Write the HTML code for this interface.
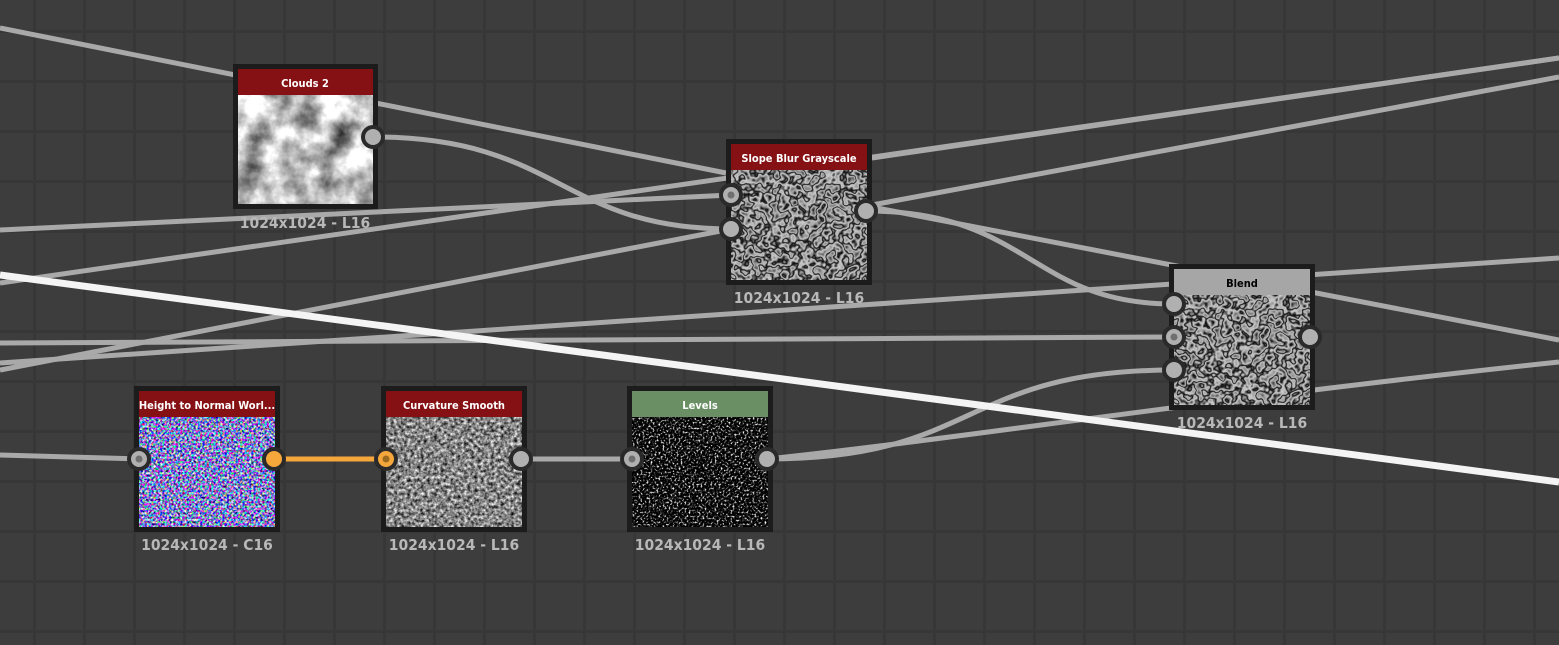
<!DOCTYPE html>
<html><head><meta charset="utf-8"><style>
html,body{margin:0;padding:0;width:1559px;height:645px;overflow:hidden;background:#3c3c3c;}
svg{display:block}
.t{font-family:"DejaVu Sans Condensed","DejaVu Sans","Liberation Sans",sans-serif;font-weight:bold;font-size:11px;text-anchor:middle}
.l{font-family:"DejaVu Sans Condensed","DejaVu Sans","Liberation Sans",sans-serif;font-weight:bold;font-size:15.5px;fill:#b8b8b8;text-anchor:middle}
</style></head><body>
<svg width="1559" height="645" viewBox="0 0 1559 645" xmlns="http://www.w3.org/2000/svg">
<defs>
<pattern id="grid" width="50" height="50" patternUnits="userSpaceOnUse" x="0" y="0">
<rect width="50" height="50" fill="#3d3d3d"/>
<rect x="33" y="0" width="3" height="50" fill="#373737"/>
<rect x="0" y="30" width="50" height="3" fill="#373737"/>
</pattern>
<filter id="clouds" x="0" y="0" width="1" height="1" color-interpolation-filters="sRGB">
<feTurbulence type="fractalNoise" baseFrequency="0.035" numOctaves="5" seed="3"/>
<feColorMatrix type="matrix" values="1.5 0 0 0 -0.05  1.5 0 0 0 -0.05  1.5 0 0 0 -0.05  0 0 0 0 1"/>
</filter>
<filter id="cells" x="0" y="0" width="1" height="1" color-interpolation-filters="sRGB">
<feTurbulence type="fractalNoise" baseFrequency="0.11" numOctaves="2" seed="7"/>
<feColorMatrix type="matrix" values="1 0 0 0 0  1 0 0 0 0  1 0 0 0 0  0 0 0 0 1"/>
<feComponentTransfer>
<feFuncR type="table" tableValues="0 0.08 0.7 0.04 0.6 0.8 0.04 0.75 0.5 0.04 0.65 0.08"/>
<feFuncG type="table" tableValues="0 0.08 0.7 0.04 0.6 0.8 0.04 0.75 0.5 0.04 0.65 0.08"/>
<feFuncB type="table" tableValues="0 0.08 0.7 0.04 0.6 0.8 0.04 0.75 0.5 0.04 0.65 0.08"/>
</feComponentTransfer>
</filter>
<filter id="normal" x="0" y="0" width="1" height="1" color-interpolation-filters="sRGB">
<feTurbulence type="fractalNoise" baseFrequency="0.45" numOctaves="2" seed="2"/>
<feColorMatrix type="matrix" values="2.6 0 0 0 -0.8  0 2.6 0 0 -0.8  0 0 2 0 -0.2  0 0 0 0 1"/>
</filter>
<filter id="curv" x="0" y="0" width="1" height="1" color-interpolation-filters="sRGB">
<feTurbulence type="fractalNoise" baseFrequency="0.3" numOctaves="3" seed="5"/>
<feColorMatrix type="matrix" values="1.4 0 0 0 -0.18  1.4 0 0 0 -0.18  1.4 0 0 0 -0.18  0 0 0 0 1"/>
</filter>
<filter id="lev" x="0" y="0" width="1" height="1" color-interpolation-filters="sRGB">
<feTurbulence type="fractalNoise" baseFrequency="0.5" numOctaves="3" seed="9"/>
<feColorMatrix type="matrix" values="4 0 0 0 -2.1  4 0 0 0 -2.1  4 0 0 0 -2.1  0 0 0 0 1"/>
</filter>
</defs>
<rect width="1559" height="645" fill="url(#grid)"/>
<g fill="none" stroke="#a9a9a9" stroke-width="5">
<line x1="0" y1="28" x2="726" y2="173"/>
<path d="M373 137 C 560 137, 560 229, 731 229"/>
<line x1="0" y1="230" x2="731" y2="195"/>
<line x1="0" y1="283" x2="1559" y2="58"/>
<line x1="0" y1="370" x2="731" y2="229"/>
<line x1="872" y1="158" x2="1559" y2="58"/>
<line x1="872" y1="205" x2="1559" y2="77"/>
<line x1="872" y1="207" x2="1559" y2="340"/>
<path d="M866 211 C 1030 211, 1030 304, 1174 304"/>
<line x1="0" y1="363" x2="1559" y2="258"/>
<line x1="0" y1="343" x2="1174" y2="337"/>
<path d="M767 459 C 980 459, 960 370, 1174 370"/>
<path d="M767 459 C 950 440, 1200 400, 1559 362"/>
<line x1="0" y1="455" x2="139" y2="459"/>
<line x1="521" y1="459" x2="632" y2="459"/>
</g>
<line x1="274" y1="459" x2="386" y2="459" stroke="#f5a73c" stroke-width="5"/>
<line x1="0" y1="275" x2="1559" y2="482" stroke="#f4f4f4" stroke-width="7"/>

<g transform="translate(233,64)">
<rect width="145" height="145" fill="#1c1c1c"/>
<rect x="5" y="31" width="135" height="109" fill="#888" filter="url(#clouds)"/>
<rect x="5" y="5" width="135" height="26" fill="#861115"/>
<text class="t" x="72" y="23" fill="#fff">Clouds 2</text>
<text class="l" x="72" y="164">1024x1024 - L16</text>
</g>
<g transform="translate(726,139)">
<rect width="146" height="146" fill="#1c1c1c"/>
<rect x="5" y="31" width="136" height="110" fill="#888" filter="url(#cells)"/>
<rect x="5" y="5" width="136" height="26" fill="#861115"/>
<text class="t" x="73" y="23" fill="#fff">Slope Blur Grayscale</text>
<text class="l" x="73" y="164">1024x1024 - L16</text>
</g>
<g transform="translate(1169,264)">
<rect width="146" height="146" fill="#1c1c1c"/>
<rect x="5" y="31" width="136" height="110" fill="#888" filter="url(#cells)"/>
<rect x="5" y="5" width="136" height="26" fill="#a6a6a6"/>
<text class="t" x="73" y="23" fill="#000">Blend</text>
<text class="l" x="73" y="164">1024x1024 - L16</text>
</g>
<g transform="translate(134,386)">
<rect width="146" height="146" fill="#1c1c1c"/>
<rect x="5" y="31" width="136" height="110" fill="#888" filter="url(#normal)"/>
<rect x="5" y="5" width="136" height="26" fill="#861115"/>
<text class="t" x="73" y="23" fill="#fff">Height to Normal Worl...</text>
<text class="l" x="73" y="164">1024x1024 - C16</text>
</g>
<g transform="translate(381,386)">
<rect width="146" height="146" fill="#1c1c1c"/>
<rect x="5" y="31" width="136" height="110" fill="#888" filter="url(#curv)"/>
<rect x="5" y="5" width="136" height="26" fill="#861115"/>
<text class="t" x="73" y="23" fill="#fff">Curvature Smooth</text>
<text class="l" x="73" y="164">1024x1024 - L16</text>
</g>
<g transform="translate(627,386)">
<rect width="146" height="146" fill="#1c1c1c"/>
<rect x="5" y="31" width="136" height="110" fill="#000" filter="url(#lev)"/>
<rect x="5" y="5" width="136" height="26" fill="#6a8f65"/>
<text class="t" x="73" y="23" fill="#fff">Levels</text>
<text class="l" x="73" y="164">1024x1024 - L16</text>
</g>

<g stroke="#2a2a2a" stroke-width="4" fill="#b0b0b0">
<circle cx="373" cy="137" r="10"/>
<circle cx="731" cy="195" r="10"/>
<circle cx="731" cy="229" r="10"/>
<circle cx="866" cy="211" r="10"/>
<circle cx="1174" cy="304" r="10"/>
<circle cx="1174" cy="337" r="10"/>
<circle cx="1174" cy="370" r="10"/>
<circle cx="1310" cy="337" r="10"/>
<circle cx="139" cy="459" r="10"/>
<circle cx="521" cy="459" r="10"/>
<circle cx="632" cy="459" r="10"/>
<circle cx="767" cy="459" r="10"/>
<circle cx="274" cy="459" r="10" fill="#f5a73c"/>
<circle cx="386" cy="459" r="10" fill="#f5a73c"/>
</g>
<g fill="#6f6f6f">
<circle cx="731" cy="195" r="3.5"/>
<circle cx="1174" cy="337" r="3.5"/>
<circle cx="139" cy="459" r="3.5"/>
<circle cx="632" cy="459" r="3.5"/>
<circle cx="386" cy="459" r="3.5" fill="#9a6a20"/>
</g>
</svg>
</body></html>
